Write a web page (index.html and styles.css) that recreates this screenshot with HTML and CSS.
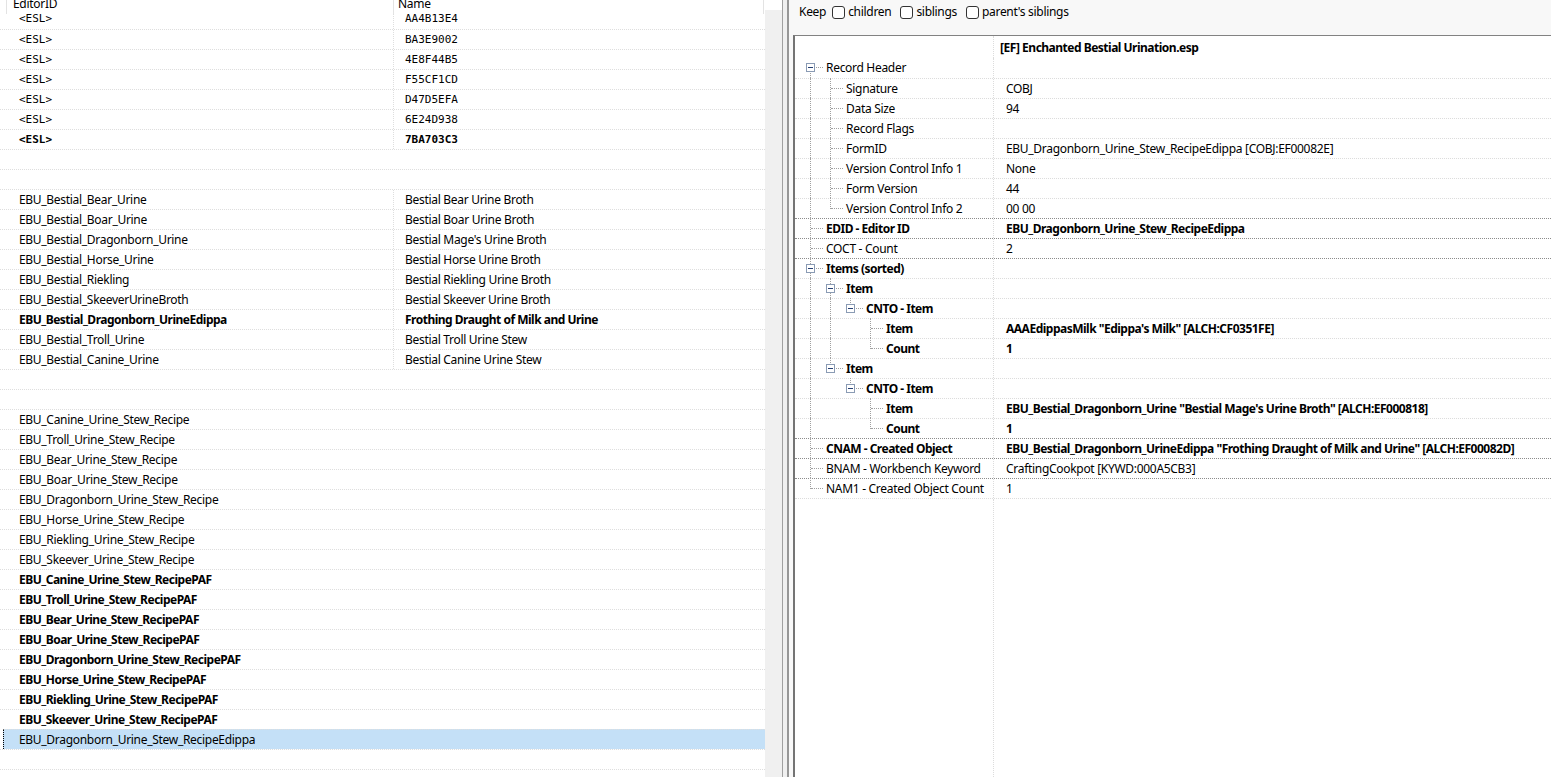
FILE: index.html
```html
<!DOCTYPE html>
<html lang="en">
<head>
    <meta charset="UTF-8">
    <title>Record View</title>
    <link rel="stylesheet" href="styles.css">
</head>
<body>
    <div class="list">
        <div class="grid">
            <div class="head">
                <div class="hc ind"></div>
                <div class="hc h1"><span>EditorID</span></div>
                <div class="hc h2"><span>Name</span></div>
            </div>
            <div class="row top mono"><div class="c1">&lt;ESL&gt;</div><div class="c2">AA4B13E4</div></div>
            <div class="row mono"><div class="c1">&lt;ESL&gt;</div><div class="c2">BA3E9002</div></div>
            <div class="row mono"><div class="c1">&lt;ESL&gt;</div><div class="c2">4E8F44B5</div></div>
            <div class="row mono"><div class="c1">&lt;ESL&gt;</div><div class="c2">F55CF1CD</div></div>
            <div class="row mono"><div class="c1">&lt;ESL&gt;</div><div class="c2">D47D5EFA</div></div>
            <div class="row mono"><div class="c1">&lt;ESL&gt;</div><div class="c2">6E24D938</div></div>
            <div class="row mono bold"><div class="c1">&lt;ESL&gt;</div><div class="c2">7BA703C3</div></div>
            <div class="row"></div>
            <div class="row"></div>
            <div class="row"><div class="c1">EBU_Bestial_Bear_Urine</div><div class="c2">Bestial Bear Urine Broth</div></div>
            <div class="row"><div class="c1">EBU_Bestial_Boar_Urine</div><div class="c2">Bestial Boar Urine Broth</div></div>
            <div class="row"><div class="c1">EBU_Bestial_Dragonborn_Urine</div><div class="c2">Bestial Mage's Urine Broth</div></div>
            <div class="row"><div class="c1">EBU_Bestial_Horse_Urine</div><div class="c2">Bestial Horse Urine Broth</div></div>
            <div class="row"><div class="c1">EBU_Bestial_Riekling</div><div class="c2">Bestial Riekling Urine Broth</div></div>
            <div class="row"><div class="c1">EBU_Bestial_SkeeverUrineBroth</div><div class="c2">Bestial Skeever Urine Broth</div></div>
            <div class="row bold"><div class="c1">EBU_Bestial_Dragonborn_UrineEdippa</div><div class="c2">Frothing Draught of Milk and Urine</div></div>
            <div class="row"><div class="c1">EBU_Bestial_Troll_Urine</div><div class="c2">Bestial Troll Urine Stew</div></div>
            <div class="row"><div class="c1">EBU_Bestial_Canine_Urine</div><div class="c2">Bestial Canine Urine Stew</div></div>
            <div class="row"></div>
            <div class="row"></div>
            <div class="row"><div class="c1">EBU_Canine_Urine_Stew_Recipe</div></div>
            <div class="row"><div class="c1">EBU_Troll_Urine_Stew_Recipe</div></div>
            <div class="row"><div class="c1">EBU_Bear_Urine_Stew_Recipe</div></div>
            <div class="row"><div class="c1">EBU_Boar_Urine_Stew_Recipe</div></div>
            <div class="row"><div class="c1">EBU_Dragonborn_Urine_Stew_Recipe</div></div>
            <div class="row"><div class="c1">EBU_Horse_Urine_Stew_Recipe</div></div>
            <div class="row"><div class="c1">EBU_Riekling_Urine_Stew_Recipe</div></div>
            <div class="row"><div class="c1">EBU_Skeever_Urine_Stew_Recipe</div></div>
            <div class="row bold"><div class="c1">EBU_Canine_Urine_Stew_RecipePAF</div></div>
            <div class="row bold"><div class="c1">EBU_Troll_Urine_Stew_RecipePAF</div></div>
            <div class="row bold"><div class="c1">EBU_Bear_Urine_Stew_RecipePAF</div></div>
            <div class="row bold"><div class="c1">EBU_Boar_Urine_Stew_RecipePAF</div></div>
            <div class="row bold"><div class="c1">EBU_Dragonborn_Urine_Stew_RecipePAF</div></div>
            <div class="row bold"><div class="c1">EBU_Horse_Urine_Stew_RecipePAF</div></div>
            <div class="row bold"><div class="c1">EBU_Riekling_Urine_Stew_RecipePAF</div></div>
            <div class="row bold"><div class="c1">EBU_Skeever_Urine_Stew_RecipePAF</div></div>
            <div class="row sel"><div class="c1">EBU_Dragonborn_Urine_Stew_RecipeEdippa</div></div>
            <div class="row"></div>
            <div class="row"></div>
        </div>
        <div class="vscroll"></div>
    </div>

    <div class="split"></div>

    <div class="side">
        <div class="tools">
            <span class="keep">Keep</span>
            <label class="chk"><i></i>children</label>
            <label class="chk"><i></i>siblings</label>
            <label class="chk"><i></i>parent's siblings</label>
        </div>

        <div class="tree">
            <div class="thead">
                <div class="tn"></div>
                <div class="tv">[EF] Enchanted Bestial Urination.esp</div>
            </div>

            <div class="trow first">
                <div class="tn"><span class="g f"><i class="box"></i></span><span class="lbl">Record Header</span></div>
                <div class="tv"></div>
            </div>
            <div class="trow">
                <div class="tn"><span class="g v"></span><span class="g t"></span><span class="lbl">Signature</span></div>
                <div class="tv">COBJ</div>
            </div>
            <div class="trow">
                <div class="tn"><span class="g v"></span><span class="g t"></span><span class="lbl">Data Size</span></div>
                <div class="tv">94</div>
            </div>
            <div class="trow">
                <div class="tn"><span class="g v"></span><span class="g t"></span><span class="lbl">Record Flags</span></div>
                <div class="tv"></div>
            </div>
            <div class="trow">
                <div class="tn"><span class="g v"></span><span class="g t"></span><span class="lbl">FormID</span></div>
                <div class="tv">EBU_Dragonborn_Urine_Stew_RecipeEdippa [COBJ:EF00082E]</div>
            </div>
            <div class="trow">
                <div class="tn"><span class="g v"></span><span class="g t"></span><span class="lbl">Version Control Info 1</span></div>
                <div class="tv">None</div>
            </div>
            <div class="trow">
                <div class="tn"><span class="g v"></span><span class="g t"></span><span class="lbl">Form Version</span></div>
                <div class="tv">44</div>
            </div>
            <div class="trow">
                <div class="tn"><span class="g v"></span><span class="g c"></span><span class="lbl">Version Control Info 2</span></div>
                <div class="tv">00 00</div>
            </div>
            <div class="trow dk bold">
                <div class="tn"><span class="g t"></span><span class="lbl">EDID - Editor ID</span></div>
                <div class="tv">EBU_Dragonborn_Urine_Stew_RecipeEdippa</div>
            </div>
            <div class="trow dk">
                <div class="tn"><span class="g t"></span><span class="lbl">COCT - Count</span></div>
                <div class="tv">2</div>
            </div>
            <div class="trow dk bold">
                <div class="tn"><span class="g t"><i class="box"></i></span><span class="lbl">Items (sorted)</span></div>
                <div class="tv"></div>
            </div>
            <div class="trow bold">
                <div class="tn"><span class="g v"></span><span class="g t"><i class="box"></i></span><span class="lbl">Item</span></div>
                <div class="tv"></div>
            </div>
            <div class="trow bold">
                <div class="tn"><span class="g v"></span><span class="g v"></span><span class="g c"><i class="box"></i></span><span class="lbl">CNTO - Item</span></div>
                <div class="tv"></div>
            </div>
            <div class="trow bold">
                <div class="tn"><span class="g v"></span><span class="g v"></span><span class="g"></span><span class="g t"></span><span class="lbl">Item</span></div>
                <div class="tv">AAAEdippasMilk "Edippa's Milk" [ALCH:CF0351FE]</div>
            </div>
            <div class="trow bold">
                <div class="tn"><span class="g v"></span><span class="g v"></span><span class="g"></span><span class="g c"></span><span class="lbl">Count</span></div>
                <div class="tv">1</div>
            </div>
            <div class="trow bold">
                <div class="tn"><span class="g v"></span><span class="g c"><i class="box"></i></span><span class="lbl">Item</span></div>
                <div class="tv"></div>
            </div>
            <div class="trow bold">
                <div class="tn"><span class="g v"></span><span class="g"></span><span class="g c"><i class="box"></i></span><span class="lbl">CNTO - Item</span></div>
                <div class="tv"></div>
            </div>
            <div class="trow bold">
                <div class="tn"><span class="g v"></span><span class="g"></span><span class="g"></span><span class="g t"></span><span class="lbl">Item</span></div>
                <div class="tv">EBU_Bestial_Dragonborn_Urine "Bestial Mage's Urine Broth" [ALCH:EF000818]</div>
            </div>
            <div class="trow bold">
                <div class="tn"><span class="g v"></span><span class="g"></span><span class="g"></span><span class="g c"></span><span class="lbl">Count</span></div>
                <div class="tv">1</div>
            </div>
            <div class="trow dk bold">
                <div class="tn"><span class="g t"></span><span class="lbl">CNAM - Created Object</span></div>
                <div class="tv">EBU_Bestial_Dragonborn_UrineEdippa "Frothing Draught of Milk and Urine" [ALCH:EF00082D]</div>
            </div>
            <div class="trow dk">
                <div class="tn"><span class="g t"></span><span class="lbl">BNAM - Workbench Keyword</span></div>
                <div class="tv">CraftingCookpot [KYWD:000A5CB3]</div>
            </div>
            <div class="trow dk last">
                <div class="tn"><span class="g c"></span><span class="lbl">NAM1 - Created Object Count</span></div>
                <div class="tv">1</div>
            </div>
            <div class="tfill"></div>
        </div>
    </div>
</body>
</html>
```

FILE: styles.css
```css
* {
    box-sizing: border-box;
}

body {
    margin: 0;
    height: 777px;
    overflow: hidden;
    display: flex;
    font-family: "Noto Sans", sans-serif;
    font-size: 12px;
    letter-spacing: -0.3px;
    color: #000;
    background: #fff;
}

.bold {
    font-weight: 700;
    letter-spacing: -0.5px;
}

/* left record list */

.list {
    width: 783px;
    flex-shrink: 0;
    display: flex;
    border-right: 1px solid #a0a0a0;
}

.grid {
    width: 765px;
    overflow: hidden;
}

.head {
    height: 14px;
    display: flex;
    overflow: hidden;
}

.hc {
    height: 14px;
    border-right: 1px solid #e3e3e3;
}

.hc span {
    display: block;
    line-height: 20px;
    margin-top: -6px;
    white-space: nowrap;
}

.ind {
    width: 7px;
}

.h1 {
    width: 387px;
    padding-left: 6px;
}

.h2 {
    width: 370px;
    padding-left: 4px;
}

.row {
    display: flex;
    height: 20px;
    line-height: 19px;
    border-top: 1px dotted #dedede;
    white-space: nowrap;
}

.row.top {
    height: 15px;
    border-top: none;
    overflow: hidden;
}

.row.top > div {
    margin-top: -5px;
    height: 20px;
}

.c1 {
    width: 393px;
    padding-left: 19px;
}

.c2 {
    flex: 1;
    padding-left: 11px;
    border-left: 1px dotted #dedede;
}

.mono {
    font-family: "DejaVu Sans Mono", monospace;
    font-size: 11px;
    letter-spacing: 0;
}

.row.sel {
    margin-left: 3px;
    border-left: 1px dotted #000;
    background: #c4e0f7;
}

.row.sel .c1 {
    padding-left: 15px;
}

.vscroll {
    width: 17px;
    margin-top: 10px;
    background: #f0f0f0;
}

.split {
    width: 6px;
    flex-shrink: 0;
    background: #f0f0f0;
    border-right: 2px solid #979797;
}

/* right record view */

.side {
    flex: 1;
    display: flex;
    flex-direction: column;
    padding-left: 4px;
    background: #f8f8f8;
}

.tools {
    height: 35px;
    display: flex;
    align-items: flex-start;
    gap: 6px;
    padding: 3px 0 0 6px;
    line-height: 18px;
}

.chk {
    display: flex;
    align-items: center;
    gap: 3px;
    margin-right: 3px;
}

.chk i {
    width: 13px;
    height: 13px;
    border: 1px solid #333;
    border-radius: 3px;
    background: #fff;
}

.tree {
    flex: 1;
    display: flex;
    flex-direction: column;
    background: #fff;
    border-top: 1px solid #828282;
    border-left: 2px solid #747474;
}

.thead {
    display: flex;
    height: 22px;
    line-height: 23px;
    font-weight: 700;
    letter-spacing: -0.5px;
}

.thead .tv {
    padding-left: 6px;
}

.trow {
    display: flex;
    height: 20px;
    line-height: 19px;
    border-top: 1px dotted #dcdcdc;
    white-space: nowrap;
}

.trow.first {
    border-top: none;
}

.trow.dk {
    border-top-color: #8c8c8c;
}

.trow.last {
    height: 21px;
    border-bottom: 1px dotted #dcdcdc;
}

.tn {
    width: 198px;
    flex-shrink: 0;
    display: flex;
    padding-left: 5px;
}

.tv {
    flex: 1;
    padding-left: 12px;
    border-left: 1px dotted #dcdcdc;
}

.lbl {
    padding-left: 6px;
}

.tfill {
    flex: 1;
    margin-left: 198px;
    border-left: 1px dotted #dcdcdc;
}

/* tree guide lines */

.g {
    width: 20px;
    flex-shrink: 0;
    position: relative;
}

.g.v::before,
.g.t::before,
.g.c::before,
.g.f::before {
    content: "";
    position: absolute;
    left: 10px;
    top: -1px;
    bottom: 0;
    border-left: 1px dotted #a0a0a0;
}

.g.c::before {
    bottom: auto;
    height: 11px;
}

.g.f::before {
    top: 10px;
}

.g.t::after,
.g.c::after,
.g.f::after {
    content: "";
    position: absolute;
    left: 11px;
    top: 9px;
    width: 12px;
    border-top: 1px dotted #a0a0a0;
}

.box {
    position: absolute;
    left: 6px;
    top: 5px;
    width: 9px;
    height: 9px;
    border: 1px solid #8a9bb4;
    background: #fff;
    z-index: 1;
}

.box::after {
    content: "";
    position: absolute;
    left: 1px;
    top: 3px;
    width: 5px;
    height: 1px;
    background: #253f72;
}
```
